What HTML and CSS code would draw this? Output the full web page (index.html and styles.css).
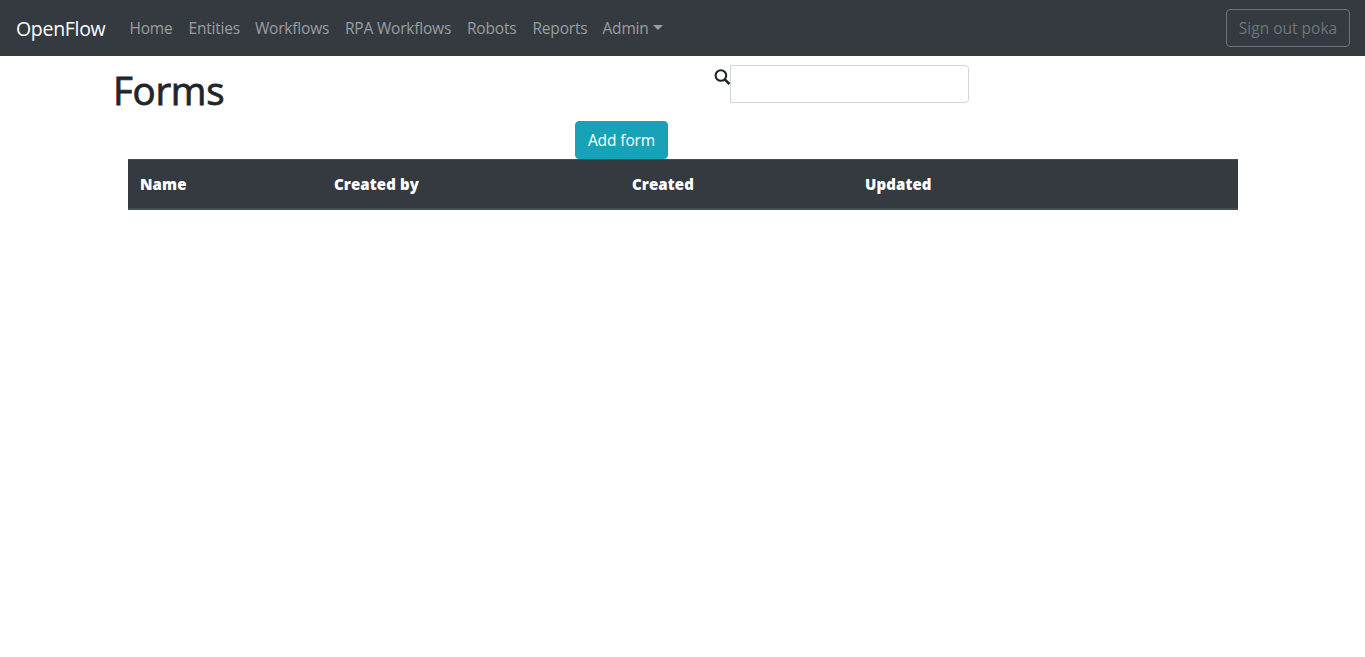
FILE: index.html
```html
<!DOCTYPE html>
<html lang="en">
<head>
<meta charset="utf-8">
<title>OpenFlow</title>
<link rel="stylesheet" href="styles.css">
</head>
<body>
<nav class="navbar">
  <a class="brand">OpenFlow</a>
  <div class="nav-links">
    <a class="nav-link home">Home</a>
    <a class="nav-link entities">Entities</a>
    <a class="nav-link workflows">Workflows</a>
    <a class="nav-link rpa">RPA Workflows</a>
    <a class="nav-link robots">Robots</a>
    <a class="nav-link reports">Reports</a>
    <a class="nav-link admin">Admin<span class="caret"></span></a>
  </div>
  <button class="btn btn-outline">Sign out poka</button>
</nav>
<main class="container">
  <header class="heading-row">
    <h1>Forms</h1>
    <div class="search">
      <svg class="search-icon" viewBox="0 0 16 16" width="16" height="16" fill="none" stroke="currentColor"><circle cx="6.900" cy="6.500" r="5.300" stroke-width="2.100"/><path d="M10.700 10.400 15.400 15" stroke-width="2.500"/></svg>
      <input class="search-input" type="text">
    </div>
  </header>
  <div class="actions"><button class="btn btn-info">Add form</button></div>
  <table class="table">
    <colgroup><col class="col-name"><col class="col-by"><col class="col-created"><col class="col-updated"><col></colgroup>
    <thead><tr>
      <th>Name</th><th>Created by</th><th>Created</th><th>Updated</th><th></th>
    </tr></thead>
  </table>
</main>
</body>
</html>
```
FILE: styles.css
```css
* { box-sizing: border-box; }
body {
  margin: 0;
  background: #fff;
  color: #212529;
  font: 400 16px/24px "Segoe UI", "Open Sans", sans-serif;
}
.navbar {
  display: flex;
  align-items: center;
  height: 56px;
  padding: 0 15px 0 16px;
  background: #343a40;
}
.brand {
  width: 105.500px;
  padding-top: 2px;
  color: #fff;
  font-size: 19.5px;
  line-height: 30px;
  letter-spacing: -0.3px;
  white-space: nowrap;
}
.nav-links { display: flex; flex: 1; }
.nav-link {
  padding: 8px;
  color: rgba(255, 255, 255, .5);
  font-size: 15.5px;
  letter-spacing: -0.2px;
  white-space: nowrap;
}
.home { width: 59px; }
.entities { width: 66.500px; }
.workflows { width: 90px; }
.rpa { width: 122px; }
.robots { width: 65.500px; }
.reports { width: 70px; }
.caret {
  display: inline-block;
  margin-left: 4px;
  vertical-align: 4px;
  border-top: 5px solid;
  border-right: 5px solid transparent;
  border-left: 5px solid transparent;
}
.btn {
  height: 38px;
  padding: 0;
  border: 1px solid;
  border-radius: 4px;
  font: 400 15.5px/24px "Segoe UI", "Open Sans", sans-serif;
  white-space: nowrap;
}
.btn-outline {
  width: 124px;
  border-color: #6c757d;
  background: transparent;
  color: #6c757d;
}
.btn-info {
  width: 93px;
  border-color: #17a2b8;
  background: #17a2b8;
  color: #fff;
  letter-spacing: -0.1px;
}
.container { width: 1110px; margin-left: 128px; }
.heading-row {
  display: flex;
  height: 65px;
  margin-left: -15px;
  padding-top: 9px;
}
h1 {
  width: 601px;
  margin: 1px 0 0;
  font-size: 38.5px;
  font-weight: 500;
  line-height: 49px;
  letter-spacing: -0.3px;
  -webkit-text-stroke: 0.8px currentColor;
}
.search { display: flex; }
.search-icon { margin-top: 4px; }
.search-input {
  width: 239px;
  height: 38px;
  padding: 6px 12px;
  border: 1px solid #ced4da;
  border-radius: 0 4px 4px 0;
  background: #fff;
}
.actions { display: flex; padding-left: 447px; }
.table {
  width: 100%;
  table-layout: fixed;
  border-spacing: 0;
  background: #343a40;
  color: #fff;
}
.table th {
  height: 51px;
  padding: 0 12px;
  border-top: 1px solid #454d55;
  border-bottom: 2px solid #454d55;
  font-size: 15px;
  font-weight: 800;
  text-align: left;
  letter-spacing: 0.1px;
}
.col-name { width: 194px; }
.col-by { width: 298px; }
.col-created { width: 233px; }
.col-updated { width: 233px; }
```
